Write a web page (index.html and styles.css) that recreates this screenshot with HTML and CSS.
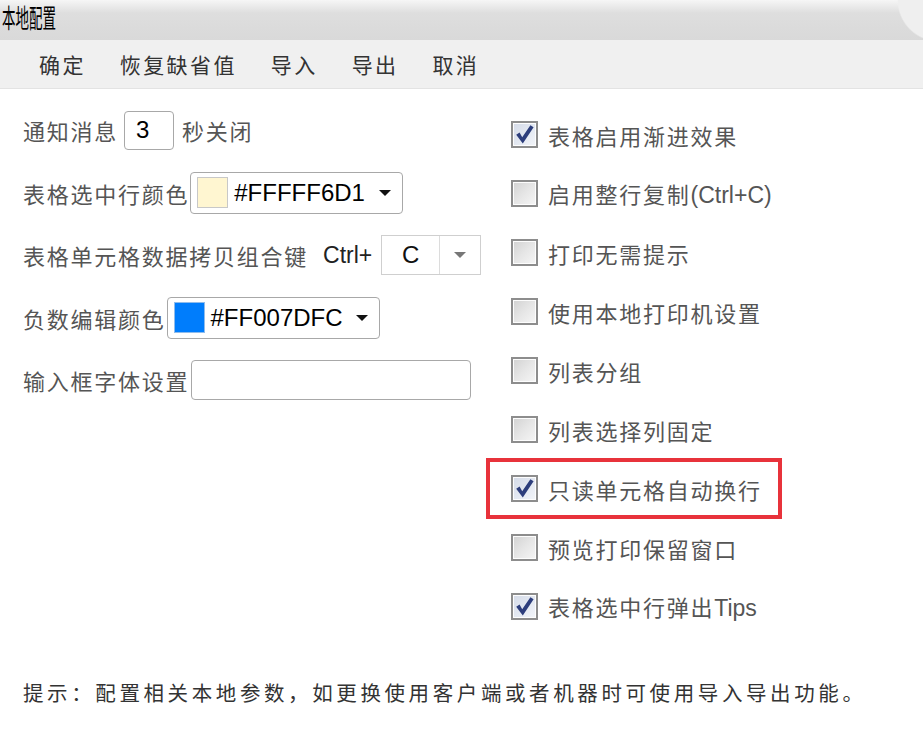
FILE: index.html
```html
<!DOCTYPE html>
<html lang="zh-CN">
<head>
<meta charset="utf-8">
<title>本地配置</title>
<link rel="stylesheet" href="styles.css">
</head>
<body>
<div class="titlebar"><span class="title">本地配置</span></div>
<div class="toolbar">
  <span class="tb-item">确定</span>
  <span class="tb-item">恢复缺省值</span>
  <span class="tb-item">导入</span>
  <span class="tb-item">导出</span>
  <span class="tb-item">取消</span>
</div>
<div class="content">
  <div class="col-left">
    <div class="row">
      <span class="lbl">通知消息</span>
      <span class="txt small-input">3</span>
      <span class="lbl after">秒关闭</span>
    </div>
    <div class="row">
      <span class="lbl">表格选中行颜色</span>
      <span class="picker"><span class="swatch swatch-cream"></span><span class="pv">#FFFFF6D1</span><span class="caret"></span></span>
    </div>
    <div class="row">
      <span class="lbl">表格单元格数据拷贝组合键</span>
      <span class="latin ctrl">Ctrl+</span>
      <span class="select"><span class="sv">C</span><span class="sbtn"><span class="caret grey"></span></span></span>
    </div>
    <div class="row">
      <span class="lbl">负数编辑颜色</span>
      <span class="picker"><span class="swatch swatch-blue"></span><span class="pv">#FF007DFC</span><span class="caret"></span></span>
    </div>
    <div class="row">
      <span class="lbl">输入框字体设置</span>
      <span class="txt wide-input"></span>
    </div>
  </div>
  <div class="col-right">
    <div class="cb-row"><span class="cb checked"><svg viewBox="0 0 27 27" width="27" height="27"><path class="tick" d="M5.2 13.8 L8.6 11.6 L11.2 16.2 L19.4 4.2 L22.6 6.2 L11.8 22.4 Z"/></svg></span><span class="cl">表格启用渐进效果</span></div>
    <div class="cb-row"><span class="cb"></span><span class="cl">启用整行复制<span class="latin">(Ctrl+C)</span></span></div>
    <div class="cb-row"><span class="cb"></span><span class="cl">打印无需提示</span></div>
    <div class="cb-row"><span class="cb"></span><span class="cl">使用本地打印机设置</span></div>
    <div class="cb-row"><span class="cb"></span><span class="cl">列表分组</span></div>
    <div class="cb-row"><span class="cb"></span><span class="cl">列表选择列固定</span></div>
    <div class="cb-row hl"><span class="cb checked"><svg viewBox="0 0 27 27" width="27" height="27"><path class="tick" d="M5.2 13.8 L8.6 11.6 L11.2 16.2 L19.4 4.2 L22.6 6.2 L11.8 22.4 Z"/></svg></span><span class="cl">只读单元格自动换行</span></div>
    <div class="cb-row"><span class="cb"></span><span class="cl">预览打印保留窗口</span></div>
    <div class="cb-row"><span class="cb checked"><svg viewBox="0 0 27 27" width="27" height="27"><path class="tick" d="M5.2 13.8 L8.6 11.6 L11.2 16.2 L19.4 4.2 L22.6 6.2 L11.8 22.4 Z"/></svg></span><span class="cl">表格选中行弹出<span class="latin">Tips</span></span></div>
  </div>
</div>
<div class="tip">提示：配置相关本地参数，如更换使用客户端或者机器时可使用导入导出功能。</div>
</body>
</html>
```
FILE: styles.css
```css
html, body {
  margin: 0;
  padding: 0;
  background: #ffffff;
}
body {
  width: 923px;
  height: 740px;
  overflow: hidden;
  font-family: "Liberation Sans", "Noto Sans CJK SC", sans-serif;
  color: #555;
}

.titlebar {
  height: 40px;
  background:
    radial-gradient(circle 42px at 939px 0px, #efefef 40.5px, rgba(239, 239, 239, 0) 42px),
    linear-gradient(to bottom, #f6f6f6 0px, #dedede 13px, #d9d9d9 40px);
}
.title {
  display: inline-block;
  font-family: "Noto Sans CJK SC", sans-serif;
  font-size: 26px;
  line-height: 34px;
  color: #000;
  transform: scaleX(0.52);
  transform-origin: left center;
  margin-left: 2px;
}

.toolbar {
  height: 48px;
  background: #f0f0f0;
  border-bottom: 1px solid #e3e3e3;
  display: flex;
  align-items: center;
  padding-left: 39px;
  gap: 34px;
}
.tb-item {
  font-family: "Noto Sans CJK SC", sans-serif;
  font-size: 21px;
  letter-spacing: 2.4px;
  line-height: 30px;
  color: #333;
}

.content {
  display: grid;
  grid-template-columns: 488px 1fr;
  padding-left: 23px;
}

.col-left {
  padding-top: 10px;
  display: flex;
  flex-direction: column;
}
.row {
  height: 62.5px;
  display: flex;
  align-items: center;
}
.lbl {
  font-family: "Noto Sans CJK SC", sans-serif;
  font-size: 22px;
  letter-spacing: 1.75px;
  line-height: 30px;
  color: #555;
  white-space: nowrap;
}
.lbl.after {
  margin-left: 8px;
}
.latin {
  font-family: "Liberation Sans", sans-serif;
  letter-spacing: 0;
}
.ctrl {
  font-size: 23px;
  color: #222;
  margin-left: 15px;
  margin-right: 9px;
}

.txt {
  box-sizing: border-box;
  border: 1.5px solid #a8a8a8;
  border-radius: 4px;
  background: #fff;
  font-family: "Liberation Sans", sans-serif;
  font-size: 24px;
  color: #000;
  display: flex;
  align-items: center;
}
.small-input {
  width: 50px;
  height: 39px;
  padding-left: 11px;
  margin-left: 6px;
}
.wide-input {
  width: 280px;
  height: 40px;
  margin-left: 2px;
}

.picker {
  box-sizing: border-box;
  width: 213px;
  height: 42px;
  border: 1.5px solid #a8a8a8;
  border-radius: 4px;
  background: #fff;
  display: flex;
  align-items: center;
  padding: 0 8px 0 6px;
  margin-left: 1px;
}
.swatch {
  box-sizing: border-box;
  width: 31px;
  height: 31px;
  border: 1px solid #c8c8c8;
  flex: none;
}
.swatch-cream { background: #fff6d1; }
.swatch-blue { background: #007dfc; border-color: #8fbcec; }
.pv {
  font-family: "Liberation Sans", sans-serif;
  font-size: 24px;
  color: #000;
  margin-left: 6px;
  flex: 1;
}
.caret {
  width: 0;
  height: 0;
  border-left: 6px solid transparent;
  border-right: 6px solid transparent;
  border-top: 6px solid #111;
  margin-right: 3px;
}
.caret.grey {
  border-top-color: #777;
  margin: 0;
}

.select {
  box-sizing: border-box;
  width: 100px;
  height: 40px;
  border: 1px solid #cfcfcf;
  background: #fff;
  display: flex;
}
.sv {
  width: 57px;
  display: flex;
  align-items: center;
  justify-content: center;
  font-family: "Liberation Sans", sans-serif;
  font-size: 24px;
  color: #111;
  border-right: 1px solid #dcdcdc;
}
.sbtn {
  flex: 1;
  display: flex;
  align-items: center;
  justify-content: center;
}

.col-right {
  padding-top: 16px;
  display: flex;
  flex-direction: column;
}
.cb-row {
  height: 59px;
  display: flex;
  align-items: center;
  box-sizing: border-box;
}
.cb-row.hl {
  width: fit-content;
  height: 61px;
  margin: -1px 0 -1px -25px;
  padding: 0 16px 0 21px;
  border: 4px solid #e8323b;
}
.cb {
  box-sizing: border-box;
  width: 27px;
  height: 27px;
  flex: none;
  border: 2px solid #8d8d8d;
  box-shadow: inset 0 0 0 1px #fdfdfd;
  background: linear-gradient(135deg, #d2d2d2 0%, #e6e6e6 50%, #f6f6f6 100%);
  display: flex;
  align-items: center;
  justify-content: center;
  overflow: hidden;
}
.cb.checked {
  background: linear-gradient(135deg, #d5dbe8 0%, #e4e9f2 55%, #f3f5f9 100%);
}
.cb svg {
  flex: none;
  margin: -2px;
}
.tick {
  fill: #2d3e7c;
}
.cl {
  margin-left: 10px;
  font-family: "Noto Sans CJK SC", sans-serif;
  font-size: 22px;
  letter-spacing: 1.75px;
  line-height: 30px;
  color: #555;
  white-space: nowrap;
}
.cl .latin {
  font-size: 23px;
}

.tip {
  margin-top: 41px;
  padding-left: 23px;
  font-family: "Noto Sans CJK SC", sans-serif;
  font-size: 20.5px;
  letter-spacing: 3.6px;
  line-height: 30px;
  color: #333;
  white-space: nowrap;
}
```
